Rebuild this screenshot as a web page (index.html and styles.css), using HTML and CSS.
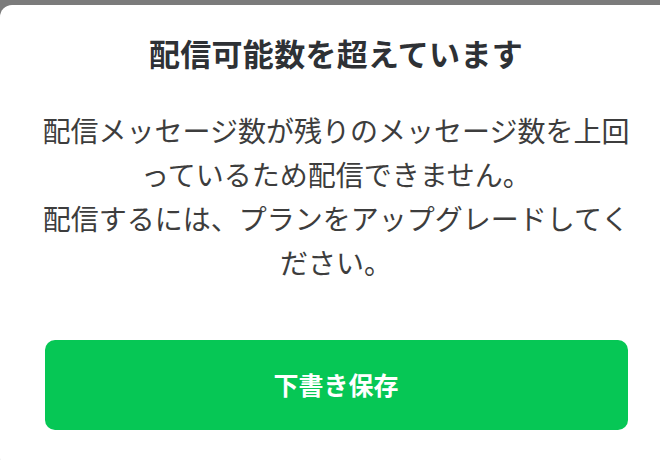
FILE: index.html
```html
<!DOCTYPE html>
<html lang="ja">
<head>
  <meta charset="UTF-8" />
  <meta name="viewport" content="width=device-width, initial-scale=1.0">
  <title>配信可能数を超えています</title>
  <link rel="stylesheet" href="styles.css">
</head>
<body>

<div class="dialog">
  <h1 class="dialog-title">配信可能数を超えています</h1>
  <p class="dialog-text">配信メッセージ数が残りのメッセージ数を上回っているため配信できません。<br>配信するには、プランをアップグレードしてください。</p>
  <button class="save-btn">下書き保存</button>
</div>

</body>
</html>
```

FILE: styles.css
```css
:root {
  --overlay: #7b7b7b;
  --card: #fff;
  --title: #2e3135;
  --text: #3d3d3d;
  --green: #06c755;
}

html, body {
  height: 100%;
}

body {
  margin: 0;
  background: var(--overlay);
  font-family: "Noto Sans CJK JP", "Noto Sans", sans-serif;
  overflow: hidden;
  padding-top: 5px;
  box-sizing: border-box;
}

.dialog {
  width: 672px;
  box-sizing: border-box;
  background: var(--card);
  border-radius: 12px;
  padding: 26px 40px 40px;
  text-align: center;
}

.dialog-title {
  margin: 0;
  font-size: 31px;
  line-height: 44px;
  letter-spacing: 0.3px;
  font-weight: 700;
  color: var(--title);
}

.dialog-text {
  margin: 33px 0 0;
  font-size: 28px;
  line-height: 44px;
  font-weight: 400;
  color: var(--text);
}

.save-btn {
  display: block;
  width: 583px;
  height: 90px;
  margin: 56px auto 0;
  padding: 0 0 3px;
  border: none;
  border-radius: 10px;
  background: var(--green);
  color: #fff;
  font-family: inherit;
  font-size: 25px;
  font-weight: 700;
  cursor: pointer;
}
```
